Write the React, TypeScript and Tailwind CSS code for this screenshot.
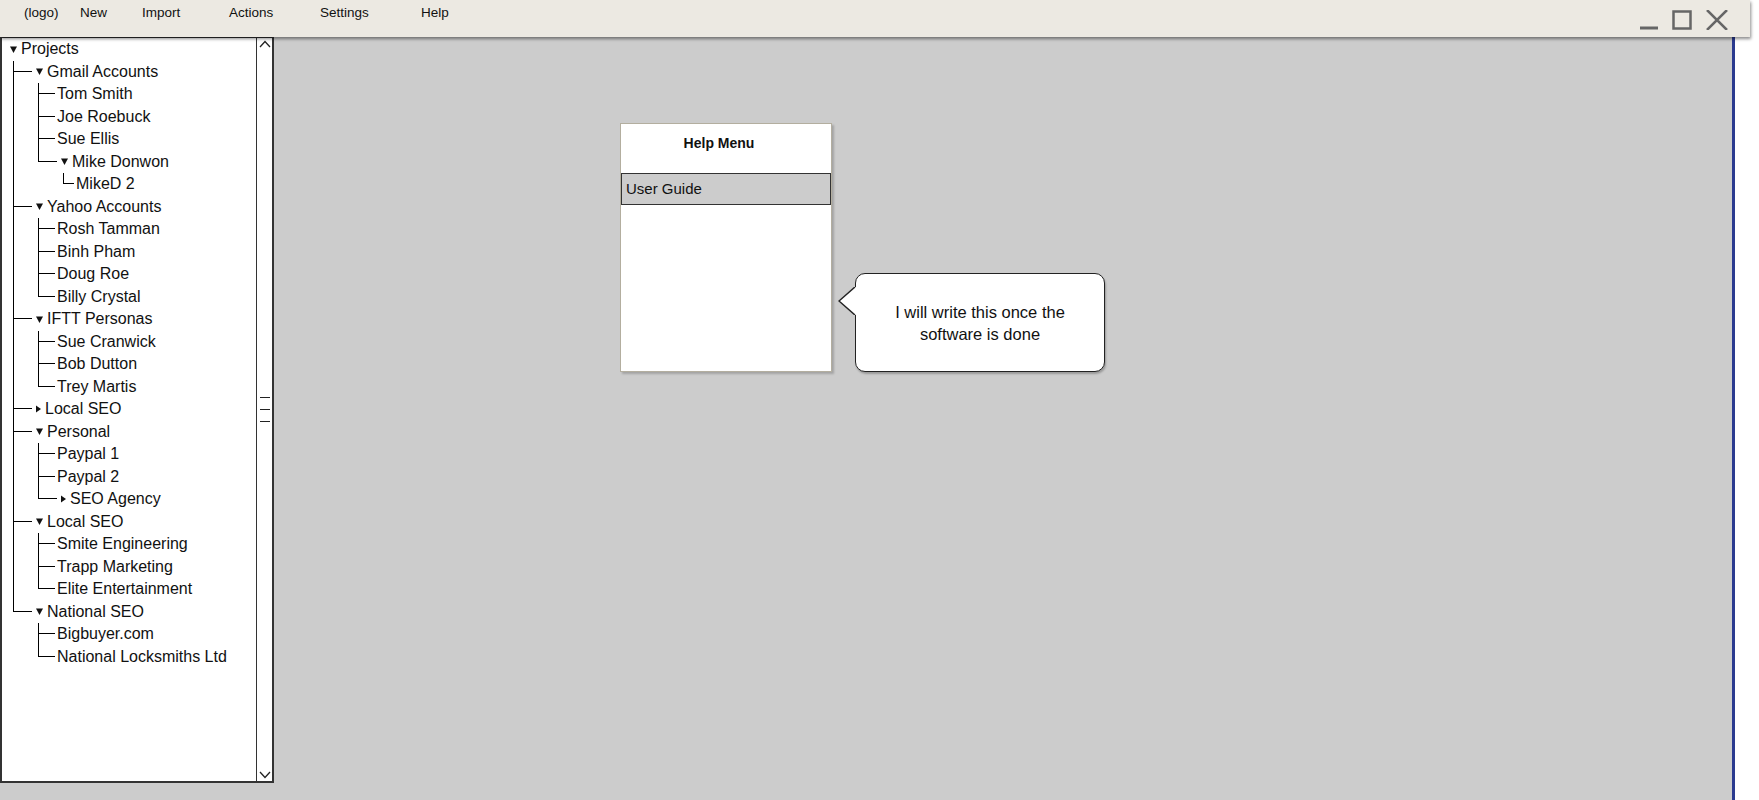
import React from 'react';

type Node = { label: string; open?: boolean; children?: Node[] };

type Row = {
  label: string;
  depth: number;
  branch: boolean;
  open: boolean;
  last: boolean;
  guides: boolean[];
};

const tree: Node = {
  label: 'Projects',
  open: true,
  children: [
    {
      label: 'Gmail Accounts',
      open: true,
      children: [
        { label: 'Tom Smith' },
        { label: 'Joe Roebuck' },
        { label: 'Sue Ellis' },
        { label: 'Mike Donwon', open: true, children: [{ label: 'MikeD 2' }] },
      ],
    },
    {
      label: 'Yahoo Accounts',
      open: true,
      children: [{ label: 'Rosh Tamman' }, { label: 'Binh Pham' }, { label: 'Doug Roe' }, { label: 'Billy Crystal' }],
    },
    {
      label: 'IFTT Personas',
      open: true,
      children: [{ label: 'Sue Cranwick' }, { label: 'Bob Dutton' }, { label: 'Trey Martis' }],
    },
    { label: 'Local SEO', open: false, children: [] },
    {
      label: 'Personal',
      open: true,
      children: [{ label: 'Paypal 1' }, { label: 'Paypal 2' }, { label: 'SEO Agency', open: false, children: [] }],
    },
    {
      label: 'Local SEO',
      open: true,
      children: [{ label: 'Smite Engineering' }, { label: 'Trapp Marketing' }, { label: 'Elite Entertainment' }],
    },
    {
      label: 'National SEO',
      open: true,
      children: [{ label: 'Bigbuyer.com' }, { label: 'National Locksmiths Ltd' }],
    },
  ],
};

// flatten the tree into rows, remembering which ancestor lines keep going
function flatten(node: Node, depth: number, last: boolean, guides: boolean[], out: Row[]) {
  out.push({ label: node.label, depth, branch: !!node.children, open: !!node.open, last, guides });
  if (node.children && node.open) {
    const next = depth === 0 ? [] : [...guides, !last];
    node.children.forEach((c, i) => flatten(c, depth + 1, i === node.children!.length - 1, next, out));
  }
}

const rows: Row[] = [];
flatten(tree, 0, true, [], rows);

const Down = () => (
  <svg width="7" height="7" viewBox="0 0 7 7" className="shrink-0 self-center">
    <polygon points="0,0.5 7,0.5 3.5,7" fill="#111" />
  </svg>
);

const Right = () => (
  <svg width="5" height="8" viewBox="0 0 5 8" className="shrink-0 self-center">
    <polygon points="0,0.5 5,4 0,7.5" fill="#111" />
  </svg>
);

const TreeRow = ({ row }: { row: Row }) => {
  const { depth, branch, open, last, guides, label } = row;
  const lineW = branch ? 'w-[19px]' : depth === 3 ? 'w-[11px]' : 'w-[17px]';
  return (
    <div className={depth === 0 ? 'flex h-[22.5px] items-stretch pl-[8px]' : 'flex h-[22.5px] items-stretch pl-[11px]'}>
      {depth > 0 && (
        <>
          {guides.map((g, i) => (
            <div key={i} className={g ? 'w-[25px] shrink-0 border-l border-black' : 'w-[25px] shrink-0'} />
          ))}
          <div className={'flex shrink-0 flex-col ' + lineW}>
            <div className="h-1/2 border-b border-l border-black" />
            <div className={last ? 'h-1/2' : 'h-1/2 border-l border-black'} />
          </div>
        </>
      )}
      {branch && <div className={depth === 0 ? '' : 'w-[4px] shrink-0'} />}
      {branch && (open ? <Down /> : <Right />)}
      <span
        className={
          branch
            ? 'ml-[4px] self-center whitespace-nowrap text-[16px] leading-none text-[#111]'
            : 'ml-[2px] self-center whitespace-nowrap text-[16px] leading-none text-[#111]'
        }
      >
        {label}
      </span>
    </div>
  );
};

const App = () => {
  return (
    <div className="relative h-[800px] w-[1759px] overflow-hidden bg-white font-['Liberation_Sans',Arial,sans-serif]">
      {/* Title / menu bar */}
      <header className="relative z-10 flex h-[37px] w-[1750px] items-start bg-[#ece9e2] pl-[24px] pt-[5px] text-[13.5px] leading-4 text-[#111] shadow-[1px_2px_3px_rgba(0,0,0,0.45)]">
        <span className="w-[56px]">(logo)</span>
        <span className="w-[62px]">New</span>
        <span className="w-[87px]">Import</span>
        <span className="w-[91px]">Actions</span>
        <span className="w-[101px]">Settings</span>
        <span>Help</span>
        <div className="ml-auto flex items-start gap-[14px] pr-[22px] pt-[5px]">
          <svg width="18" height="20" viewBox="0 0 18 20">
            <line x1="0" y1="18" x2="18" y2="18" stroke="#666" strokeWidth="3" />
          </svg>
          <svg width="20" height="20" viewBox="0 0 20 20">
            <rect x="1.5" y="1.5" width="17" height="17" fill="none" stroke="#666" strokeWidth="2.5" />
          </svg>
          <svg width="22" height="20" viewBox="0 0 22 20">
            <path d="M1 0 L21 20 M21 0 L1 20" stroke="#666" strokeWidth="2.5" />
          </svg>
        </div>
      </header>

      <div className="-mt-px flex h-[764px]">
        <div className="flex w-[1735px] border-r-[3px] border-[#2b3a8f] bg-[#cccccc]">
          {/* Project tree */}
          <aside className="flex h-[747px] w-[274px] shrink-0 border-2 border-[#333] bg-white">
            <div className="flex-1 overflow-hidden">
              {rows.map((r, i) => (
                <TreeRow key={i} row={r} />
              ))}
            </div>
            <div className="flex w-[16px] flex-col items-center border-l border-[#333]">
              <svg width="12" height="8" viewBox="0 0 12 8" className="mt-[2px]">
                <polyline points="1,7 6,1.5 11,7" fill="none" stroke="#222" strokeWidth="1.3" />
              </svg>
              <div className="mt-[349px] flex w-[10px] flex-col gap-[11px]">
                <div className="h-px bg-[#222]" />
                <div className="h-px bg-[#222]" />
                <div className="h-px bg-[#222]" />
              </div>
              <div className="flex-1" />
              <svg width="12" height="8" viewBox="0 0 12 8" className="mb-[2px]">
                <polyline points="1,1 6,6.5 11,1" fill="none" stroke="#222" strokeWidth="1.3" />
              </svg>
            </div>
          </aside>

          {/* Canvas */}
          <main className="flex flex-1 items-start pl-[346px] pt-[87px]">
            <div className="flex h-[249px] w-[212px] flex-col border border-[#b3ae9f] bg-white shadow-[2px_2px_2px_rgba(0,0,0,0.2)]">
              <div className="flex h-[39px] items-center justify-center pr-[14px] text-[14px] font-bold text-[#111]">Help Menu</div>
              <div className="mt-[10px] flex h-[32px] items-center border-[1.5px] border-[#333] bg-[#cccccc] pl-[4px] text-[15px] text-[#111]">
                User Guide
              </div>
            </div>

            <div className="relative ml-[23px] mt-[150px] flex h-[99px] w-[250px] flex-col items-center justify-center rounded-[10px] border-[1.5px] border-[#222] bg-white text-center text-[16.5px] leading-[22px] text-[#111] shadow-[1px_2px_2px_rgba(0,0,0,0.25)]">
              <svg width="20" height="28" viewBox="0 0 20 28" className="absolute left-[-18px] top-[13px]">
                <polygon points="20,0 17,0 1,14 17,28 20,28" fill="#fff" />
                <polyline points="17,0 1,14 17,28" fill="none" stroke="#222" strokeWidth="1.5" />
              </svg>
              <span>I will write this once the</span>
              <span>software is done</span>
            </div>
          </main>
        </div>
      </div>
    </div>
  );
};

export default App;
